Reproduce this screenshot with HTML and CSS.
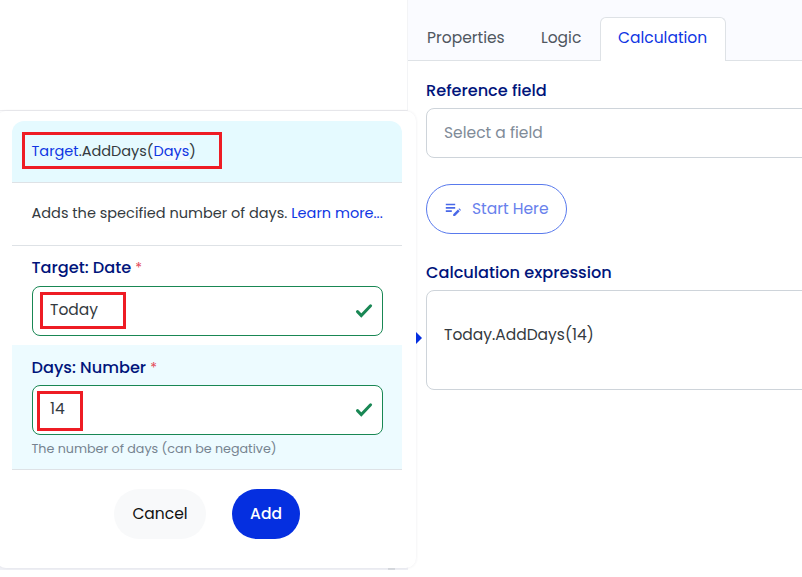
FILE: index.html
```html
<!DOCTYPE html>
<html lang="en">
<head>
<meta charset="utf-8">
<title>Calculation</title>
<link rel="stylesheet" href="styles.css">
</head>
<body>
<div class="canvas"></div>
<main class="panel">
  <nav class="tabs">
    <a class="tab tab-properties"><span>Properties</span></a>
    <a class="tab tab-logic"><span>Logic</span></a>
    <a class="tab active"><span>Calculation</span></a>
  </nav>
  <div class="panel-body">
    <label class="label reference-label">Reference field</label>
    <div class="box select">Select a field</div>
    <button class="start">
      <svg width="16" height="14" viewBox="0 0 16 14"><path d="M.8 1.5h9.4M.8 4.8h9.4M.8 8.1h6" fill="none" stroke="currentColor" stroke-width="1.7"/><path d="M8.2 13v-1.8l4.7-4.7 1.8 1.8-4.7 4.7zM13.5 5.9l.7-.7 1.8 1.8-.7.7z" fill="currentColor"/></svg>
      <span>Start Here</span>
    </button>
    <label class="label expression-label">Calculation expression</label>
    <div class="box expression">Today.AddDays(14)</div>
  </div>
</main>
<div class="edge"></div>
<section class="popover">
  <i class="pointer"></i>
  <header class="signature"><div class="mark signature-mark"><b>Target</b>.AddDays(<b class="argument">Days</b>)</div></header>
  <p class="description"><span class="summary">Adds the specified number of days.</span><a>Learn more...</a></p>
  <div class="field target">
    <label class="label target-label">Target: Date <em>*</em></label>
    <div class="input"><div class="mark target-mark">Today</div>
      <svg class="check" width="16" height="14" viewBox="0 0 16 14"><path d="M1.5 7.6 5.3 11.6 14.6 1.8" fill="none" stroke="currentColor" stroke-width="3"  stroke-linecap="round"/></svg></div>
  </div>
  <div class="field days">
    <label class="label days-label">Days: Number <em>*</em></label>
    <div class="input"><div class="mark days-mark">14</div>
      <svg class="check" width="16" height="14" viewBox="0 0 16 14"><path d="M1.5 7.6 5.3 11.6 14.6 1.8" fill="none" stroke="currentColor" stroke-width="3" stroke-linecap="round"/></svg></div>
    <small class="help">The number of days (can be negative)</small>
  </div>
  <footer class="actions"><button class="cancel">Cancel</button><button class="add">Add</button></footer>
</section>
</body>
</html>
```

FILE: styles.css
```css
* { box-sizing: border-box; }
body {
  margin: 0;
  width: 802px;
  height: 577px;
  overflow: hidden;
  position: relative;
  display: grid;
  grid-template-columns: 408px 1fr;
  background: #fff;
  color: #343a40;
  font: 400 15.5px/24px Poppins, Inter, sans-serif;
}
button { font: inherit; border: 0; padding: 0; }
.canvas { height: 111px; border-bottom: 1px solid #ededf0; border-right: 1px solid #f3f4f6; }
.panel { height: 577px; overflow: hidden; }
.tabs {
  display: flex;
  align-items: flex-end;
  height: 61px;
  padding-left: 19px;
  background: #fafbff;
  border-bottom: 1px solid #dee2e6;
}
.tab { height: 44px; padding-top: 10px; color: #50575f; white-space: nowrap; }
.tab-properties { width: 114px; }
.tab-logic { width: 59px; }
.tab.active {
  width: 126px;
  padding-left: 17px;
  margin-bottom: -1px;
  border: 1px solid #dee2e6;
  border-bottom: 0;
  border-radius: 6px 6px 0 0;
  background: #fff;
  color: #0f36e3;
  padding-top: 8px;
}
.panel-body { padding: 17px 0 0 18px; }
.label {
  display: block;
  height: 24px;
  color: #00147b;
  font-size: 16.15px;
  font-weight: 500;
  line-height: 25px;
  white-space: nowrap;
}
.label em { color: #e44c59; font-style: normal; font-weight: 400; font-size: 14px; }
.box {
  width: 400px;
  border: 1px solid #ced4da;
  border-radius: 8px;
  padding-left: 17px;
  background: #fff;
}
.select { height: 50px; margin-top: 6px; line-height: 48px; color: #7f8b98; }
.start {
  display: flex;
  align-items: center;
  width: 141px;
  height: 50px;
  margin: 26px 0;
  padding-left: 18px;
  gap: 11px;
  border: 1px solid #597aed;
  border-radius: 25px;
  background: #fff;
  color: #6881ec;
}
.start svg { margin-top: 2px; overflow: visible; color: #4968e8; }
.expression { height: 100px; margin-top: 6px; padding-top: 32px; }
.edge {
  position: absolute;
  left: 0;
  top: 560px;
  width: 408px;
  height: 10px;
  background: linear-gradient(90deg, #f0f1f6 388px, #d9dce1 388px 395px, #f0f1f6 395px);
}
.popover {
  position: absolute;
  left: -4px;
  top: 111px;
  width: 420px;
  height: 457px;
  padding: 10px 14px 0 16px;
  border-radius: 10px;
  background: #fff;
  box-shadow: 0 0 3px rgba(40, 45, 80, .09);
}
.pointer {
  position: absolute;
  left: 420px;
  top: 221px;
  border: 6px solid transparent;
  border-left-color: #052fe0;
  border-right: 0;
}
.mark { border: 3px solid #ee1c24; white-space: nowrap; }
.signature {
  height: 62px;
  padding: 11px 0 0 10px;
  border-bottom: 1px solid #dee2e6;
  border-radius: 12px 12px 0 0;
  background: #e5faff;
}
.signature-mark { width: 200px; height: 37px; padding: 4px 0 0 6.5px; font-size: 14.5px; }
.signature b { font-weight: 400; color: #0f36e3; }
.signature .argument { background: #f0faff; }
.description {
  display: flex;
  gap: 4px;
  height: 63px;
  margin: 0;
  padding: 18px 0 0 19.5px;
  border-bottom: 1px solid #dee2e6;
  font-size: 14.5px;
  white-space: nowrap;
}
.description a { color: #0f36e3; }
.field { padding: 10px 19px 0 20px; }
.field .label, .help { margin-left: -.5px; }
.target { height: 99px; }
.days { height: 125px; background: #edfbff; border-bottom: 1px solid #dee2e6; }
.target .label { line-height: 24px; }
.input {
  display: flex;
  align-items: flex-start;
  justify-content: space-between;
  height: 50px;
  margin-top: 6px;
  padding: 5px 10px 0 7px;
  border: 1px solid #198754;
  border-radius: 8px;
  background: #fff;
}
.days .input { padding-left: 4px; }
.target-mark { width: 86px; height: 37px; padding: 3px 0 0 7px; }
.days-mark { width: 46px; height: 40px; padding: 3px 0 0 10px; }
.check { margin-top: 12px; color: #198754; overflow: visible; }
.help { display: block; margin-top: 4px; height: 20px; font-size: 12.7px; line-height: 20px; color: #768390; white-space: nowrap; }
.actions { display: flex; gap: 26px; padding: 19px 0 0 102px; }
.actions button { height: 50px; border-radius: 25px; }
.cancel { width: 92px; background: #f8f9fa; color: #111; }
.add { width: 68px; background: #052fe0; color: #fff; font-weight: 500; }
```
